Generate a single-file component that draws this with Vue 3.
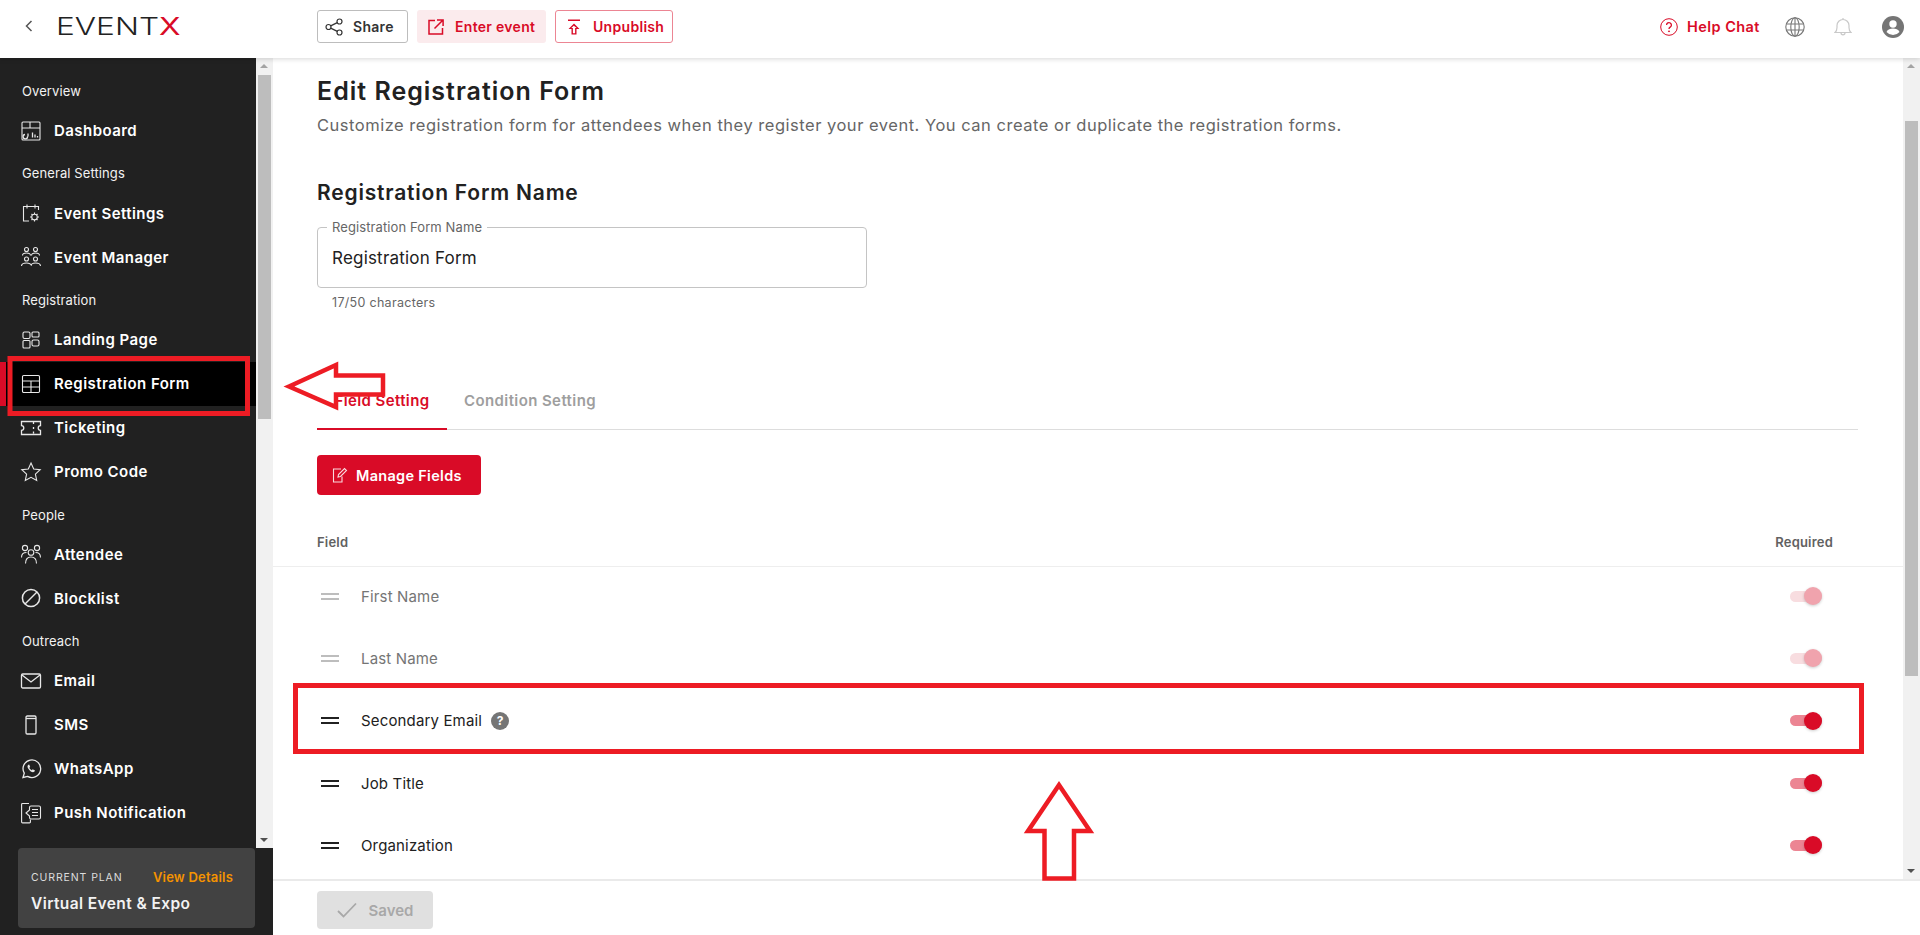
<script setup>
const sections = [
  { label: 'Overview', items: [{ name: 'Dashboard', icon: 'dash' }] },
  { label: 'General Settings', items: [{ name: 'Event Settings', icon: 'cal' }, { name: 'Event Manager', icon: 'mgr' }] },
  { label: 'Registration', items: [{ name: 'Landing Page', icon: 'land' }, { name: 'Registration Form', icon: 'table', active: true }, { name: 'Ticketing', icon: 'ticket' }, { name: 'Promo Code', icon: 'star' }] },
  { label: 'People', items: [{ name: 'Attendee', icon: 'people' }, { name: 'Blocklist', icon: 'block' }] },
  { label: 'Outreach', items: [{ name: 'Email', icon: 'mail' }, { name: 'SMS', icon: 'sms' }, { name: 'WhatsApp', icon: 'wa' }, { name: 'Push Notification', icon: 'push' }] },
]
const fields = [
  { name: 'First Name', locked: true },
  { name: 'Last Name', locked: true },
  { name: 'Secondary Email', help: true },
  { name: 'Job Title' },
  { name: 'Organization' },
]
</script>

<template>
  <div class="page">
    <header class="top">
      <div class="brand">
        <svg class="back" width="10" height="14" viewBox="0 0 10 14"><path d="M7.5 2 2.500 7l5 5" fill="none" stroke="#555" stroke-width="1.500"/></svg>
        <span class="logo">EVENT<b>X</b></span>
      </div>
      <div class="actions">
        <button class="btn share">
          <svg width="18" height="18" viewBox="0 0 18 18" fill="none" stroke="#333" stroke-width="1.200"><circle cx="3.500" cy="9" r="2.500"/><circle cx="14.500" cy="3.500" r="2.500"/><circle cx="14.500" cy="14.500" r="2.500"/><path d="m5.700 7.900 6.600-3.300M5.700 10.100l6.600 3.300"/></svg>
          Share
        </button>
        <button class="btn enter">
          <svg width="16" height="16" viewBox="0 0 16 16" fill="none" stroke="#d90b27" stroke-width="1.500"><path d="M7 1.500H1v13.500h13.500V9M9 .9h6.100V7M15 1 6.500 9.500"/></svg>
          Enter event
        </button>
        <button class="btn unpub">
          <svg width="12" height="16" viewBox="0 0 12 16" fill="#d90b27"><path d="M0 .5h12V2H0zM6 4.500 11.500 10H8.500v5.500h-5V10H.5zM5.800 6.800 3.300 9h1.600v5.200h2.200V9h1.600z" fill-rule="evenodd"/></svg>
          Unpublish
        </button>
      </div>
      <div class="tools">
        <svg width="18" height="18" viewBox="0 0 18 18" fill="none" stroke="#d90b27" stroke-width="1"><circle cx="9" cy="9" r="8.300"/><path d="M6.600 7a2.400 2.400 0 1 1 3.600 2.100c-.8.500-1.200.9-1.200 1.900" stroke-width="1.300"/><circle cx="9" cy="13.300" r=".5" fill="#d90b27"/></svg>
        <span class="help">Help Chat</span>
        <svg class="globe" width="20" height="20" viewBox="0 0 20 20" fill="none" stroke="#777" stroke-width="1.100"><circle cx="10" cy="10" r="9.200"/><ellipse cx="10" cy="10" rx="4.200" ry="9.200"/><path d="M1.500 7h17M1.500 13h17M10 .8v18.400"/></svg>
        <svg class="bell" width="18" height="20" viewBox="0 0 18 20" fill="none" stroke="#c9c9c9" stroke-width="1.200"><path d="M1 15.500c1.600-1.200 2-2.500 2-5V8.500a6 6 0 0 1 12 0v2c0 2.500.4 3.800 2 5zM7 15.800a2 2 0 1 0 4 0M9 1v1.500"/></svg>
        <svg class="avatar" width="22" height="22" viewBox="0 0 22 22"><circle cx="11" cy="11" r="11" fill="#757575"/><circle cx="11" cy="8" r="3.700" fill="#fff"/><path d="M4.500 16c1-2.500 4-3.400 6.500-3.400s5.500.9 6.500 3.400a8.600 8.600 0 0 1-13 0z" fill="#fff"/></svg>
      </div>
    </header>

    <div class="body">
      <aside class="side">
        <nav class="nav">
          <div class="nav-list">
            <template v-for="s in sections" :key="s.label">
              <div class="sec">{{ s.label }}</div>
              <div v-for="i in s.items" :key="i.name" class="item" :class="{ active: i.active }">
                <svg class="ico" width="22" height="22" viewBox="0 0 22 22" fill="none" stroke="#e8e8e8" stroke-width="1.100">
                  <g v-if="i.icon === 'dash'"><rect x="2" y="2" width="18" height="18" rx="1"/><path d="M2 8h18M10 2v6"/><path d="M5 14.500a2.200 2.200 0 1 0 2.500 2M8 13.500v3M12.500 17.500v-5M15 17.500v-3M17.500 17.500v-1.500" stroke-width="1.300"/></g>
                  <g v-else-if="i.icon === 'cal'"><path d="M9 19H3.500V4.500h15V8M7 2.500v4M15 2.500v4"/><circle cx="14.500" cy="15" r="2.800"/><path d="M14.500 10.500V12M14.500 18v1.500M10 15h1.500M17.500 15H19M11.500 12l1 1M16.500 17l1 1M17.500 12l-1 1M12.500 17l-1 1"/></g>
                  <g v-else-if="i.icon === 'mgr'"><circle cx="6.500" cy="3.500" r="2"/><circle cx="15.500" cy="3.500" r="2"/><path d="M2.500 9.500c0-2 2-2.500 4-2.500s4 .5 4 2.500M11.500 9.500c0-2 2-2.500 4-2.500s4 .5 4 2.500"/><circle cx="6.500" cy="13" r="2"/><circle cx="15.500" cy="13" r="2"/><path d="M1.500 20c0-2 2.500-3 5-3s5 1 5 3M11 20c0-2 2.200-3 4.500-3s5 1 5 3"/></g>
                  <g v-else-if="i.icon === 'land'"><rect x="3" y="3" width="7" height="6.500" rx="1.500"/><rect x="12" y="3" width="7" height="5" rx="1"/><rect x="3" y="11.500" width="7" height="7.500" rx="1"/><rect x="12" y="11" width="7" height="6" rx="1.500"/></g>
                  <g v-else-if="i.icon === 'table'"><rect x="2.500" y="2.500" width="17" height="17" rx="1.200"/><path d="M2.500 8h17M2.500 14h17M11 8v11.500"/></g>
                  <path v-else-if="i.icon === 'ticket'" d="M1.500 4.500h19v4.200a2.300 2.300 0 0 0 0 4.600v4.200h-19v-4.200a2.300 2.300 0 0 0 0-4.600zM13.500 5v2M13.500 10v2M13.500 14.500v2" stroke-width="1.300"/>
                  <path v-else-if="i.icon === 'star'" d="m11 2 2.700 6 6.500.7-4.800 4.400 1.300 6.400L11 16.300l-5.700 3.200 1.300-6.400-4.800-4.400 6.500-.7z"/>
                  <g v-else-if="i.icon === 'people'"><circle cx="5" cy="5" r="2.600"/><circle cx="17" cy="5" r="2.600"/><circle cx="11" cy="9.500" r="2.800"/><path d="M1.500 14.500c0-3.500 1.800-5 5-5M20.500 14.500c0-3.500-1.800-5-5-5M5.500 20.500c0-4.500 2.200-6.500 5.500-6.500s5.500 2 5.500 6.500"/></g>
                  <g v-else-if="i.icon === 'block'"><circle cx="11" cy="11" r="8.600" stroke-width="1.500"/><path d="m5 17 12-12" stroke-width="1.500"/></g>
                  <g v-else-if="i.icon === 'mail'"><rect x="1.500" y="4" width="19" height="14" rx="1.200" stroke-width="1.300"/><path d="m2 5 9 7 9-7" stroke-width="1.300"/></g>
                  <g v-else-if="i.icon === 'sms'"><rect x="6" y="2" width="10" height="18" rx="1.200" stroke-width="1.300"/><path d="M6 4.500h10" stroke-width="1.300"/></g>
                  <g v-else-if="i.icon === 'wa'"><path d="M3 19.500l1.300-4.300a8.800 8.800 0 1 1 3.300 3.200z" stroke-width="1.300"/><path d="M8 7c-1 1.500-.5 3 1.300 5s3.500 2.800 5 1.800l.7-1.300-2.300-1.200-.9 1c-1-.4-2-1.500-2.500-2.500l.9-.9L9.200 6.600z" fill="#e8e8e8" stroke="none"/></g>
                  <g v-else><path d="M9 1.500H2.500a.9.900 0 0 0-.9.900V20a.9.900 0 0 0 .9.900h7a.9.900 0 0 0 .9-.9v-2.500"/><path d="M6 11 9.500 8V5.500a1.500 1.500 0 0 1 1.500-1.500h8a1.500 1.500 0 0 1 1.500 1.500v10a1.500 1.500 0 0 1-1.500 1.500h-8A1.500 1.500 0 0 1 9.500 15.500V14z"/><path d="M12 7.500h6M12 10.500h6M12 13.500h6"/></g>
                </svg>
                <span>{{ i.name }}</span>
              </div>
            </template>
          </div>
          <div class="sbar">
            <i class="up"></i>
            <div class="thumb"></div>
            <i class="down"></i>
          </div>
        </nav>
        <div class="plan-wrap">
          <div class="plan">
            <div class="plan-top"><span class="cp">CURRENT PLAN</span><span class="vd">View Details</span></div>
            <div class="pn">Virtual Event &amp; Expo</div>
          </div>
        </div>
      </aside>

      <main class="main">
        <div class="scroll">
          <div class="content">
            <h1>Edit Registration Form</h1>
            <p class="desc">Customize registration form for attendees when they register your event. You can create or duplicate the registration forms.</p>
            <h2>Registration Form Name</h2>
            <fieldset class="input">
              <legend>Registration Form Name</legend>
              <span>Registration Form</span>
            </fieldset>
            <div class="count">17/50 characters</div>
            <div class="tabs">
              <div class="tab on">Field Setting</div>
              <div class="tab">Condition Setting</div>
            </div>
            <button class="manage">
              <svg width="18" height="18" viewBox="0 0 18 18" fill="none" stroke="#fff" stroke-opacity=".85" stroke-width="1.100"><path d="M10 3H2.500v13H11V10.500"/><path d="m7 11 .5-2.500L13.500 2.500l2 2-6 6z"/></svg>
              Manage Fields
            </button>
            <div class="thead"><span>Field</span><span>Required</span></div>
            <div class="rows">
              <div v-for="f in fields" :key="f.name" class="row" :class="{ locked: f.locked }">
                <span class="grip"></span>
                <span class="fname">{{ f.name }}</span>
                <span v-if="f.help" class="qm">?</span>
                <span class="toggle"><i></i></span>
              </div>
            </div>
          </div>
          <div class="sbar main-bar">
            <i class="up"></i>
            <div class="thumb"></div>
            <i class="down"></i>
          </div>
        </div>
        <footer class="foot">
          <button class="saved">
            <svg width="20" height="16" viewBox="0 0 20 16" fill="none" stroke="#a8a8a8" stroke-width="1.800"><path d="m1 9 5.500 5.500L19 1.500"/></svg>
            Saved
          </button>
        </footer>
      </main>
    </div>

    <svg class="marks" width="1920" height="935" viewBox="0 0 1920 935" fill="none" stroke="#ed1c24">
      <rect x="10" y="358.500" width="237.500" height="55" stroke-width="5"/>
      <rect x="295.500" y="685.500" width="1566" height="66" stroke-width="5"/>
      <path d="M289 386.500 336 365v10.500h47v19h-47V407z" stroke-width="4.500"/>
      <path d="M1059 785 1028 831h16.500v47.500h29.500V831H1090z" stroke-width="4.500"/>
    </svg>
  </div>
</template>

<style>
html, body { margin: 0; background: #fff; overflow: hidden; }
</style>

<style scoped>
.page { position: relative; width: 1920px; height: 935px; overflow: hidden; font-family: Inter, "Noto Sans", sans-serif; color: #212121; display: flex; flex-direction: column; }
.top { height: 58px; flex: none; display: flex; align-items: center; padding-bottom: 5px; box-sizing: border-box; box-shadow: 0 1px 5px rgba(0,0,0,.16); position: relative; z-index: 2; background: #fff; }
.brand { width: 317px; flex: none; display: flex; align-items: center; padding-left: 24px; box-sizing: border-box; }
.back { margin-right: 21.500px; }
.logo { font-weight: 300; font-size: 24.700px; line-height: 1; color: #222; display: inline-block; transform: scaleX(1.280); transform-origin: left center; }
.logo b { font-weight: 400; color: #d90b27; }
.actions { display: flex; gap: 9px; }
.btn { height: 33px; box-sizing: border-box; border-radius: 3px; font: 600 14px Inter, sans-serif; letter-spacing: .3px; display: flex; align-items: center; background: #fff; padding: 0; justify-content: flex-start; }
.share { width: 91px; border: 1px solid #bdbdbd; color: #333; padding-left: 7px; gap: 10px; }
.enter { width: 129px; border: 0; background: #fbebed; color: #d90b27; padding-left: 11px; gap: 11px; }
.unpub { width: 118px; border: 1px solid #ec8593; color: #d90b27; padding-left: 12px; gap: 13px; }
.tools { margin-left: auto; display: flex; align-items: center; padding-right: 16px; }
.help { font-weight: 600; font-size: 14.500px; letter-spacing: .45px; color: #d90b27; margin-left: 9px; width: 74px; white-space: nowrap; }
.globe { margin-left: 24px; }
.bell { margin-left: 29px; }
.avatar { margin-left: 30px; }

.body { flex: 1; display: flex; min-height: 0; }
.side { width: 273px; flex: none; display: flex; flex-direction: column; background: #212121; }
.nav { flex: 1; display: flex; min-height: 0; }
.nav-list { width: 256px; flex: none; padding-top: 12px; box-sizing: border-box; }
.sec { height: 38.600px; display: flex; align-items: center; padding: 3px 0 0 22px; box-sizing: border-box; font-size: 13px; letter-spacing: .1px; color: #f2f2f2; }
.item { height: 44px; display: flex; align-items: center; padding-left: 20px; color: #fff; font-weight: 600; font-size: 15px; letter-spacing: .45px; box-sizing: border-box; }
.item.active { background: #000; box-shadow: inset 6px 0 0 #d90b27; }
.ico { margin-right: 12px; flex: none; }
.sbar { width: 17px; background: #f1f1f1; position: relative; flex: none; }
.sbar .thumb { position: absolute; left: 2px; right: 2px; top: 17px; height: 344px; background: #bdbdbd; }
.sbar .up, .sbar .down { position: absolute; left: 4px; width: 0; height: 0; border-left: 4.500px solid transparent; border-right: 4.500px solid transparent; }
.sbar .up { top: 6px; border-bottom: 4.500px solid #a3a3a3; }
.sbar .down { bottom: 6px; border-top: 4.500px solid #505050; }
.plan-wrap { height: 87px; flex: none; padding: 0 18px 7px 18px; box-sizing: border-box; }
.plan { height: 80px; background: #424242; border-radius: 4px; padding: 21px 13px 0 13px; box-sizing: border-box; }
.plan-top { display: flex; justify-content: space-between; align-items: center; padding-right: 9px; }
.cp { font-size: 10.500px; letter-spacing: .9px; color: #ddd; }
.vd { font-size: 13px; font-weight: 600; letter-spacing: .2px; color: #f59300; }
.pn { font-size: 15.500px; font-weight: 600; letter-spacing: .4px; color: #f2f2f2; margin-top: 9px; }

.main { flex: 1; display: flex; flex-direction: column; min-width: 0; }
.scroll { flex: 1; display: flex; min-height: 0; }
.content { flex: 1; min-width: 0; padding-top: 18px; }
h1 { margin: 0 0 0 44px; font-size: 25px; line-height: 30px; font-weight: 600; letter-spacing: 1px; color: #212121; }
.desc { margin: 7px 0 0 44px; font-size: 16.500px; letter-spacing: .51px; line-height: 24px; color: #666; }
h2 { margin: 41px 0 0 44px; font-size: 21px; line-height: 30px; font-weight: 600; letter-spacing: .8px; color: #212121; }
.input { margin: 13px 0 0 44px; padding: 0 14px; width: 550px; height: 67px; box-sizing: border-box; border: 1px solid #c4c4c4; border-radius: 4px; font-size: 17px; letter-spacing: .2px; min-inline-size: 0; }
.input legend { font-size: 13px; letter-spacing: .1px; color: #666; padding: 0 5px; margin-left: -5px; line-height: 12px; }
.input span { display: block; margin-top: 13px; line-height: 24px; color: #212121; }
.count { margin: 7px 0 0 59px; font-size: 12.500px; letter-spacing: .3px; line-height: 16px; color: #666; }
.tabs { margin: 71px 45px 0 44px; display: flex; border-bottom: 1px solid #ddd; height: 48px; box-sizing: border-box; }
.tab { width: 130px; padding-top: 9px; box-sizing: border-box; text-align: center; font-weight: 600; font-size: 15px; letter-spacing: .4px; color: #9e9e9e; height: 48px; line-height: 20px; white-space: nowrap; }
.tab + .tab { width: auto; margin-left: 17px; }
.tab.on { color: #d90b27; border-bottom: 2px solid #d90b27; }
.manage { margin: 25px 0 0 44px; width: 164px; height: 40px; border: 0; border-radius: 4px; background: #d90b27; color: #fff; font: 600 14.500px Inter, sans-serif; letter-spacing: .3px; display: flex; align-items: center; padding: 0 0 0 14px; gap: 7px; }
.thead { margin-top: 26px; height: 46px; padding: 0 70px 3px 44px; display: flex; justify-content: space-between; align-items: center; font-size: 13px; letter-spacing: .2px; font-weight: 600; color: #616161; border-bottom: 1px solid #eee; box-sizing: border-box; }
.row { height: 62.300px; box-sizing: border-box; display: flex; align-items: center; padding: 0 81px 4px 48px; color: #212121; font-size: 15px; letter-spacing: .15px; }
.row.locked { color: #757575; }
.grip { width: 18px; height: 3px; border-top: 2px solid #212121; border-bottom: 2px solid #212121; margin-right: 22px; }
.row.locked .grip { border-color: #bdbdbd; }
.qm { width: 18px; height: 18px; border-radius: 50%; background: #757575; color: #fff; font-size: 12px; font-weight: 700; letter-spacing: 0; display: flex; align-items: center; justify-content: center; margin-left: 9px; }
.toggle { margin-left: auto; width: 32px; height: 11px; border-radius: 6px; background: #ec8593; position: relative; }
.toggle i { position: absolute; right: 0; top: -3.500px; width: 18px; height: 18px; border-radius: 50%; background: #d90b27; box-shadow: 0 1px 3px rgba(0,0,0,.2); }
.row.locked .toggle { background: #f8dde0; }
.row.locked .toggle i { background: #f0a3ad; }
.main-bar .thumb { top: 63px; height: 555px; }
.foot { height: 56px; flex: none; border-top: 2px solid #eaeaea; box-sizing: border-box; padding: 10px 0 0 44px; }
.saved { width: 116px; height: 38px; border: 0; border-radius: 4px; background: #e0e0e0; color: #a8a8a8; font: 600 15px Inter, sans-serif; display: flex; align-items: center; justify-content: center; gap: 12px; padding: 0; }
.marks { position: absolute; left: 0; top: 0; pointer-events: none; z-index: 5; }
</style>
